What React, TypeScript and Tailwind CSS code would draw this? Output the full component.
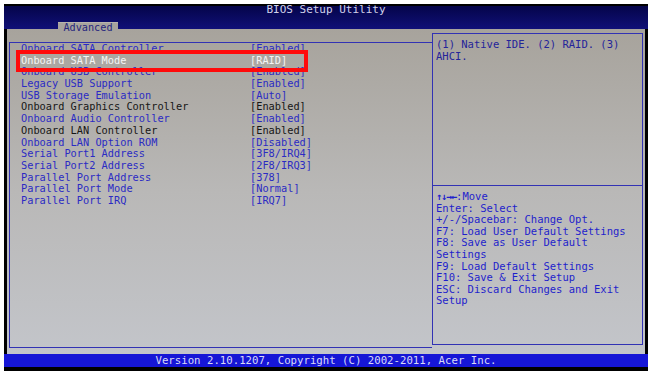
const mono = { fontFamily: '"DejaVu Sans Mono", "Liberation Mono", monospace' };

type Row = { label: string; value: string; tone: "blue" | "black" | "white" };

const rows: Row[] = [
  { label: "Onboard SATA Controller", value: "[Enabled]", tone: "blue" },
  { label: "Onboard SATA Mode", value: "[RAID]", tone: "white" },
  { label: "Onboard USB Controller", value: "[Enabled]", tone: "blue" },
  { label: "Legacy USB Support", value: "[Enabled]", tone: "blue" },
  { label: "USB Storage Emulation", value: "[Auto]", tone: "blue" },
  { label: "Onboard Graphics Controller", value: "[Enabled]", tone: "black" },
  { label: "Onboard Audio Controller", value: "[Enabled]", tone: "blue" },
  { label: "Onboard LAN Controller", value: "[Enabled]", tone: "black" },
  { label: "Onboard LAN Option ROM", value: "[Disabled]", tone: "blue" },
  { label: "Serial Port1 Address", value: "[3F8/IRQ4]", tone: "blue" },
  { label: "Serial Port2 Address", value: "[2F8/IRQ3]", tone: "blue" },
  { label: "Parallel Port Address", value: "[378]", tone: "blue" },
  { label: "Parallel Port Mode", value: "[Normal]", tone: "blue" },
  { label: "Parallel Port IRQ", value: "[IRQ7]", tone: "blue" },
];

const toneClass = {
  blue: "text-[#2b2bc4]",
  black: "text-[#161616]",
  white: "text-[#f6f6f6]",
};

const helpKeys = [
  "Enter: Select",
  "+/-/Spacebar: Change Opt.",
  "F7: Load User Default Settings",
  "F8: Save as User Default",
  "Settings",
  "F9: Load Default Settings",
  "F10: Save & Exit Setup",
  "ESC: Discard Changes and Exit",
  "Setup",
];

export default function App() {
  return (
    <div className="w-[652px] h-[373px] bg-white pt-[4px] pl-[4px] overflow-hidden" style={mono}>
      <div className="w-[644px] h-[367px] bg-black flex flex-col pt-[2px] pb-[4px]">
        {/* title bar */}
        <div className="h-[23px] flex flex-col bg-linear-to-b from-[#05054a] to-[#101078]">
          <div className="h-[9px] leading-[8px] text-center text-[11px] text-[#d2d2ea]">BIOS Setup Utility</div>
          <div className="mt-auto -mb-[4px] ml-[54px] w-[60px] h-[11px] relative z-10 bg-[#a7a39d] border-t border-[#b8b4ae] text-center text-[10.2px] leading-[10px] text-[#26267e]">
            Advanced
          </div>
        </div>

        {/* main area */}
        <div className="h-[325px] mx-[3px] flex bg-linear-to-b from-[#a7a39c] via-[#b9b8b7] to-[#c3c5ca]">
          <div className="relative ml-[2px] mt-[13px] mb-[6px] w-[423px] border-l border-t border-b border-[#3232b4] pl-[11px]">
            {rows.map((r) => (
              <div key={r.label} className={`flex h-[11.7px] leading-[11.7px] text-[10.3px] whitespace-nowrap ${toneClass[r.tone]}`}>
                <span className="w-[229px]">{r.label}</span>
                <span>{r.value}</span>
              </div>
            ))}
            <div className="absolute left-[6px] top-[7px] w-[292px] h-[22px] border-4 border-[#ff0a0a]" />
          </div>

          <div className="mt-[4px] mb-[9px] w-[211px] border border-[#3232b4] flex flex-col text-[10.5px] leading-[11.6px] whitespace-nowrap">
            <div className="h-[151px] pt-[5px] pl-[3px] text-[#24249a]">
              <div>(1) Native IDE. (2) RAID. (3)</div>
              <div>AHCI.</div>
            </div>
            <div className="border-t border-[#3232b4] pt-[5px] pl-[3px] text-[#1f1fcc]">
              <div className="flex items-center">
                <span className="font-bold text-[10px] tracking-[-1px]">↑↓→←</span>
                <span>:Move</span>
              </div>
              {helpKeys.map((k, i) => (
                <div key={i}>{k}</div>
              ))}
            </div>
          </div>
        </div>

        {/* footer */}
        <div className="h-[13px] bg-[#1616d6] text-center text-[10.7px] leading-[13px] text-[#dadaf6]">
          Version 2.10.1207, Copyright (C) 2002-2011, Acer Inc.
        </div>
      </div>
    </div>
  );
}
